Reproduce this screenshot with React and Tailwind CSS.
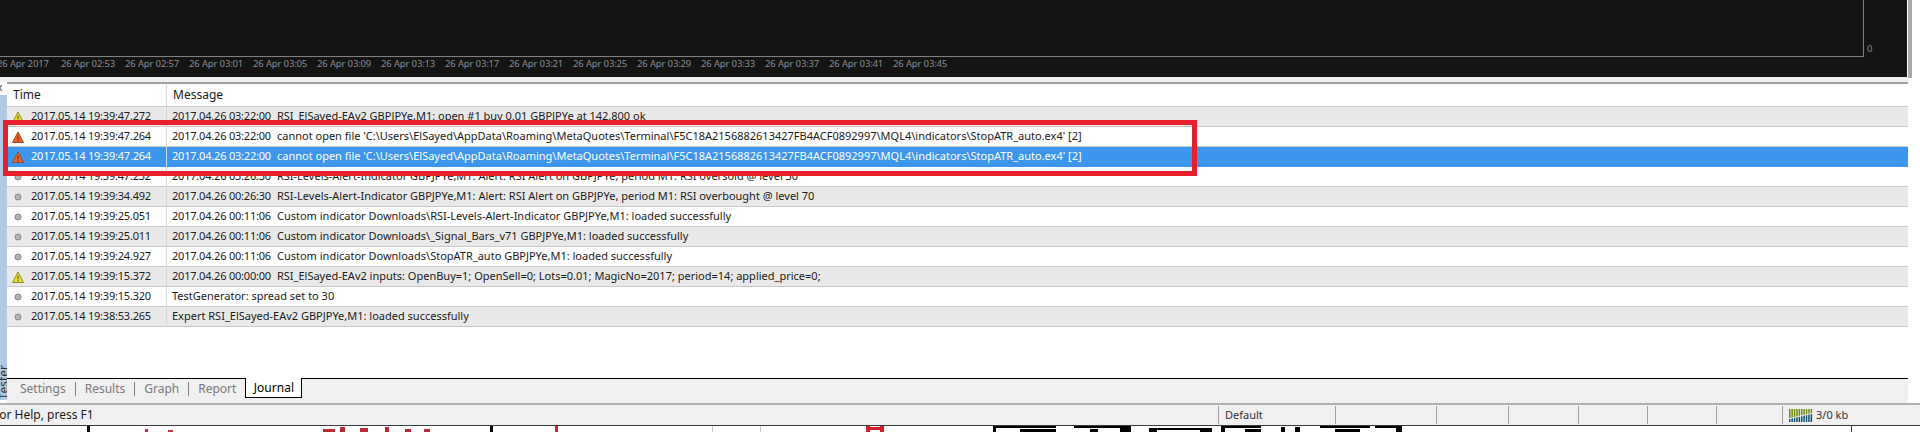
const axisLabels = ['26 Apr 2017', '26 Apr 02:53', '26 Apr 02:57', '26 Apr 03:01', '26 Apr 03:05', '26 Apr 03:09', '26 Apr 03:13', '26 Apr 03:17', '26 Apr 03:21', '26 Apr 03:25', '26 Apr 03:29', '26 Apr 03:33', '26 Apr 03:37', '26 Apr 03:41', '26 Apr 03:45'];

const badFile = "cannot open file 'C:\\Users\\ElSayed\\AppData\\Roaming\\MetaQuotes\\Terminal\\F5C18A2156882613427FB4ACF0892997\\MQL4\\indicators\\StopATR_auto.ex4' [2]";

const rows = [
  { icon: 'warn', time: '2017.05.14 19:39:47.272', date: '2017.04.26 03:22:00', msg: 'RSI_ElSayed-EAv2 GBPJPYe,M1: open #1 buy 0.01 GBPJPYe at 142.800 ok' },
  { icon: 'error', time: '2017.05.14 19:39:47.264', date: '2017.04.26 03:22:00', msg: badFile },
  { icon: 'error', time: '2017.05.14 19:39:47.264', date: '2017.04.26 03:22:00', msg: badFile, selected: true },
  { icon: 'info', time: '2017.05.14 19:39:47.232', date: '2017.04.26 03:26:30', msg: 'RSI-Levels-Alert-Indicator GBPJPYe,M1: Alert: RSI Alert on GBPJPYe, period M1: RSI oversold @ level 30' },
  { icon: 'info', time: '2017.05.14 19:39:34.492', date: '2017.04.26 00:26:30', msg: 'RSI-Levels-Alert-Indicator GBPJPYe,M1: Alert: RSI Alert on GBPJPYe, period M1: RSI overbought @ level 70' },
  { icon: 'info', time: '2017.05.14 19:39:25.051', date: '2017.04.26 00:11:06', msg: 'Custom indicator Downloads\\RSI-Levels-Alert-Indicator GBPJPYe,M1: loaded successfully' },
  { icon: 'info', time: '2017.05.14 19:39:25.011', date: '2017.04.26 00:11:06', msg: 'Custom indicator Downloads\\_Signal_Bars_v71 GBPJPYe,M1: loaded successfully' },
  { icon: 'info', time: '2017.05.14 19:39:24.927', date: '2017.04.26 00:11:06', msg: 'Custom indicator Downloads\\StopATR_auto GBPJPYe,M1: loaded successfully' },
  { icon: 'warn', time: '2017.05.14 19:39:15.372', date: '2017.04.26 00:00:00', msg: 'RSI_ElSayed-EAv2 inputs: OpenBuy=1; OpenSell=0; Lots=0.01; MagicNo=2017; period=14; applied_price=0;' },
  { icon: 'info', time: '2017.05.14 19:39:15.320', msg: 'TestGenerator: spread set to 30' },
  { icon: 'info', time: '2017.05.14 19:38:53.265', msg: 'Expert RSI_ElSayed-EAv2 GBPJPYe,M1: loaded successfully' },
];

// tops of whatever sits under the window: [x, y, w, h, colour]
const underBits = [
  [87, 0, 3, 6, '#000'], [145, 3, 3, 3, '#c8303a'], [168, 4, 5, 2, '#c8303a'],
  [323, 3, 12, 3, '#b82a34'], [340, 1, 5, 5, '#b82a34'], [360, 2, 8, 4, '#b82a34'], [385, 1, 4, 5, '#b82a34'], [405, 3, 6, 3, '#b82a34'], [424, 3, 6, 3, '#b82a34'],
  [490, 0, 3, 6, '#000'], [555, 0, 3, 6, '#d0202c'], [712, 0, 1, 6, '#c8c8c8'], [760, 0, 1, 6, '#c8c8c8'],
  [866, 0, 4, 6, '#d0202c'], [870, 1, 10, 3, '#d0202c'], [880, 0, 4, 6, '#d0202c'],
  [993, 0, 63, 2, '#000'], [993, 2, 3, 4, '#000'], [1020, 3, 36, 3, '#000'], [1074, 0, 57, 2, '#000'], [1090, 3, 8, 3, '#000'], [1120, 2, 11, 4, '#000'],
  [1149, 2, 63, 2, '#000'], [1149, 4, 8, 2, '#000'], [1200, 4, 12, 2, '#000'], [1221, 0, 40, 2, '#000'], [1221, 2, 4, 4, '#000'], [1245, 3, 16, 3, '#000'],
  [1281, 1, 4, 5, '#000'], [1295, 1, 5, 5, '#000'], [1320, 0, 50, 2, '#000'], [1335, 3, 25, 3, '#000'], [1375, 0, 27, 2, '#000'], [1396, 2, 6, 4, '#000'], [1851, 0, 1, 6, '#333'],
];

const RowIcon = ({ type }) => {
  if (type === 'info') {
    return (
      <svg width="16" height="16" viewBox="0 0 16 16">
        <circle cx="8" cy="8" r="3" fill="#b4b4b4" stroke="#858585" />
      </svg>
    );
  }
  const fill = type === 'warn' ? '#e6dc3c' : '#e8642c';
  const edge = type === 'warn' ? '#8c8c28' : '#9a4a2a';
  const mark = type === 'warn' ? '#6b6b20' : '#7a3018';
  return (
    <svg width="16" height="16" viewBox="0 0 16 16">
      <path d="M8 3 L13.5 13.5 L2.5 13.5 Z" fill={fill} stroke={edge} strokeLinejoin="round" />
      <rect x="7.4" y="6.5" width="1.2" height="3.8" fill={mark} />
      <rect x="7.4" y="11" width="1.2" height="1.2" fill={mark} />
    </svg>
  );
};

const SignalIcon = () => (
  <svg width="24" height="13" viewBox="0 0 24 13">
    {Array.from({ length: 10 }).map((_, i) => (
      <g key={i}>
        <rect x={i * 2.4} y="0" width="1.5" height={9 - i * 0.55} fill="#6f8a12" />
        <rect x={i * 2.4} y={10 - i * 0.55} width="1.5" height={3 + i * 0.55} fill="#12506e" />
      </g>
    ))}
  </svg>
);

const App = () => {
  return (
    <div className="relative h-[432px] w-[1920px] overflow-hidden bg-white font-['Noto_Sans','Liberation_Sans',sans-serif] text-[11px] text-[#1a1a1a]">
      {/* chart */}
      <div className="relative h-[77px] w-[1907px] bg-[#141414] text-[9.5px] text-[#8c8c8c]">
        <div className="h-[57px] w-[1864px] border-r border-b border-[#808080]"></div>
        <div className="flex">
          {axisLabels.map((label, i) => (
            <div key={label} className={`w-[64px] shrink-0 tracking-[-0.15px] whitespace-nowrap ${i === 0 ? '-ml-[3px]' : ''}`}>
              {label}
            </div>
          ))}
        </div>
        <span className="absolute top-[42px] left-[1867px]">0</span>
      </div>
      <div className="absolute top-0 left-[1908px] h-[78px] w-[4px] bg-[#aaaaaa]"></div>

      {/* terminal */}
      <div className="h-[326px] w-[1909px] border-t-[5px] border-[#f0f0f0]">
        <div className="flex h-[321px]">
          <div className="flex w-[7px] shrink-0 flex-col">
            <div className="-ml-[3px] h-[13px] overflow-hidden text-[10px] leading-[10px] text-[#333]">x</div>
            <div className="relative mb-[3px] flex-1 overflow-hidden bg-[#b0cae6]">
              <span className="absolute bottom-[1px] -left-[5px] rotate-180 text-[12px] text-[#333] [writing-mode:vertical-rl]">Tester</span>
            </div>
          </div>
          <div className="flex w-[1901px] flex-col">
            <div className="flex-1 border-t-2 border-[#a0a0a0]">
              <div className="flex h-[23px] items-center border-b border-[#c8c8c8] text-[12px]">
                <div className="flex h-full w-[160px] items-center border-r border-[#d8d8d8] pl-[6px]">Time</div>
                <div className="pl-[6px]">Message</div>
              </div>
              {rows.map((row, i) => (
                <div
                  key={i}
                  className={`flex h-[20px] items-center border-b ${row.selected ? 'border-[#3d96ee] bg-[#3d96ee] text-white' : i % 2 === 0 ? 'border-[#c8c8c8] bg-[#e9e9e9]' : 'border-[#c8c8c8] bg-white'}`}
                >
                  <div className="flex h-[20px] w-[160px] items-center border-r border-[#d8d8d8] pl-[3px]">
                    <RowIcon type={row.icon} />
                    <span className="pl-[5px] tracking-[-0.2px] whitespace-nowrap">{row.time}</span>
                  </div>
                  <div className="flex gap-[6px] pl-[5px] whitespace-nowrap">
                    {row.date && <span className="tracking-[-0.2px]">{row.date}</span>}
                    <span>{row.msg}</span>
                  </div>
                </div>
              ))}
            </div>
            {/* tabs */}
            <div className="flex h-[25px] shrink-0 items-start border-t border-black bg-[#f0f0f0] pl-[13px] text-[12px] text-[#7a7a7a]">
              <div className="flex h-[20px] items-center">
                <span>Settings</span>
                <span className="mx-[9px] h-[14px] border-l border-[#808080]"></span>
                <span>Results</span>
                <span className="mx-[9px] h-[14px] border-l border-[#808080]"></span>
                <span>Graph</span>
                <span className="mx-[9px] h-[14px] border-l border-[#808080]"></span>
                <span>Report</span>
              </div>
              <div className="ml-[9px] -mt-[1px] flex h-[20px] w-[57px] items-center justify-center border-x border-b border-black bg-white text-black">Journal</div>
            </div>
          </div>
        </div>
      </div>

      {/* status bar */}
      <div className="flex h-[22px] items-center border-t-2 border-[#b0b0b0] bg-[#f0f0f0]">
        <div className="-ml-[7px] w-[1225px] shrink-0 text-[12px] whitespace-nowrap">For Help, press F1</div>
        <div className="flex h-[18px] w-[117px] items-center border-l border-[#a0a0a0] pl-[6px] text-[#333]">Default</div>
        <div className="h-[18px] w-[101px] border-l border-[#a0a0a0]"></div>
        <div className="h-[18px] w-[72px] border-l border-[#a0a0a0]"></div>
        <div className="h-[18px] w-[70px] border-l border-[#a0a0a0]"></div>
        <div className="h-[18px] w-[69px] border-l border-[#a0a0a0]"></div>
        <div className="h-[18px] w-[69px] border-l border-[#a0a0a0]"></div>
        <div className="h-[18px] w-[66px] border-l border-[#a0a0a0]"></div>
        <div className="flex h-[18px] items-center gap-[3px] border-l border-[#a0a0a0] pl-[6px] text-[#333]">
          <SignalIcon />
          <span>3/0 kb</span>
        </div>
      </div>
      <div className="h-[1px] bg-[#3a3a3a]"></div>
      <svg width="1920" height="6" viewBox="0 0 1920 6" className="block">
        {underBits.map(([x, y, w, h, c], i) => (
          <rect key={i} x={x} y={y} width={w} height={h} fill={c} />
        ))}
      </svg>

      {/* red annotation box */}
      <div className="absolute top-[120px] left-[3px] h-[56px] w-[1194px] border-[5px] border-[#e8202e]"></div>
    </div>
  );
};

export default App;
